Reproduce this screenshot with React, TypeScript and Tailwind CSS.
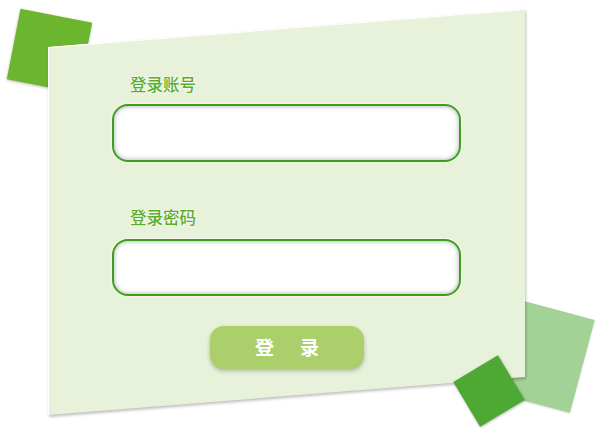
import React from "react";

export default function App() {
  const font = { fontFamily: '"Noto Sans CJK SC", "Noto Sans", sans-serif' };
  return (
    <div className="relative w-[600px] h-[432px] overflow-hidden bg-white" style={font}>
      {/* decorative square top-left */}
      <div className="absolute left-[13px] top-[15px] w-[73px] h-[72px] rotate-[11deg] bg-[#6bb52f] shadow-[0_1px_3px_rgba(0,0,0,0.25)]" />
      {/* decorative square bottom-right light */}
      <div className="absolute left-[488px] top-[306px] w-[96px] h-[96px] rotate-[15deg] bg-[#a3d297] shadow-[0_1px_2px_rgba(0,0,0,0.15)]" />
      {/* skewed card */}
      <div className="absolute left-[48px] top-[28px] w-[477px] h-[368px] skew-y-[-4.56deg] bg-[#e8f2da] border-t border-l border-white shadow-[1px_2px_3px_rgba(0,0,0,0.25)]" />
      {/* content */}
      <div className="relative z-10 flex flex-col pt-[74px] pl-[112px] w-[461px]">
        <div className="pl-[18px] text-[16.5px] leading-[21px] font-medium text-[#5aae2c] [text-shadow:0_0_2px_#fff,0_0_2px_#fff]">
          登录账号
        </div>
        <div className="mt-[9px] h-[58px] w-[349px] rounded-[16px] border-2 border-[#3d9e1f] bg-white shadow-[inset_0_0_5px_rgba(0,0,0,0.35),0_0_3px_#fff]" />
        <div className="mt-[45px] pl-[18px] text-[16.5px] leading-[21px] font-medium text-[#5aae2c] [text-shadow:0_0_2px_#fff,0_0_2px_#fff]">
          登录密码
        </div>
        <div className="mt-[11px] h-[57px] w-[349px] rounded-[16px] border-2 border-[#3d9e1f] bg-white shadow-[inset_0_0_5px_rgba(0,0,0,0.35),0_0_3px_#fff]" />
        <div className="mt-[30px] ml-[98px] flex h-[43px] w-[154px] items-center justify-center gap-[26px] rounded-[14px] bg-[#abcf6b] text-[19px] font-bold text-white shadow-[0_2px_4px_rgba(0,0,0,0.25)]">
          <span>登</span>
          <span>录</span>
        </div>
      </div>
      {/* decorative square bottom-right dark */}
      <div className="absolute z-20 left-[463px] top-[365px] w-[52px] h-[52px] rotate-[-31deg] bg-[#4da834] shadow-[0_1px_3px_rgba(0,0,0,0.3)]" />
    </div>
  );
}
